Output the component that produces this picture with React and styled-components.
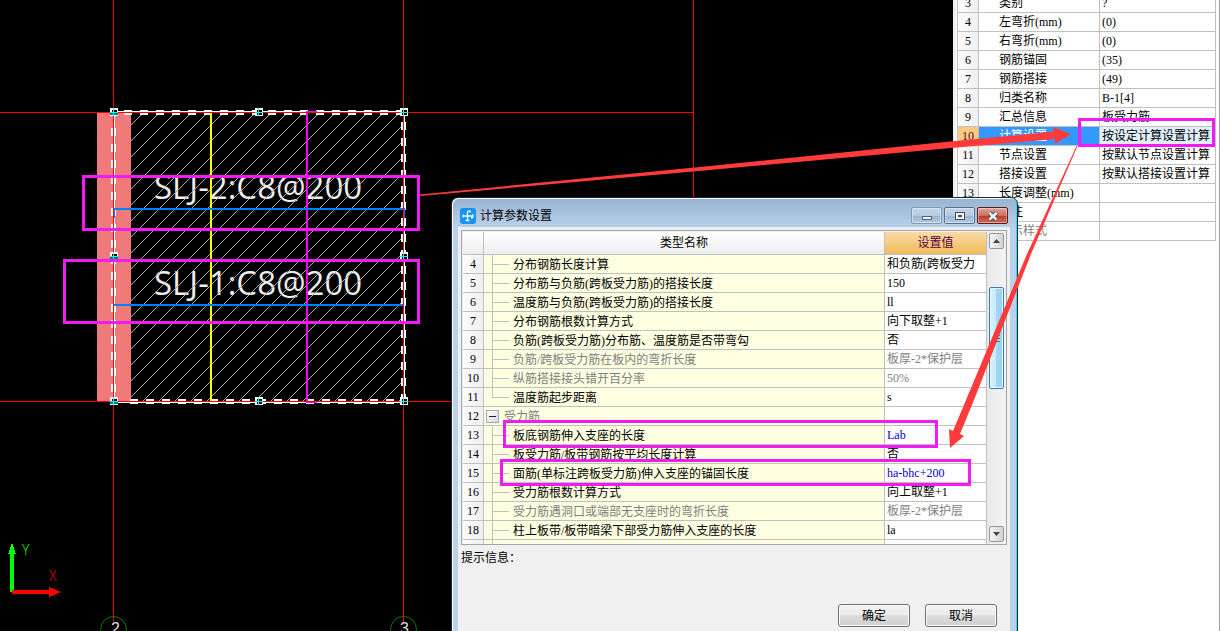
import React from "react";
import styled, { createGlobalStyle, css } from "styled-components";

const properties = [
  { no: 3, name: "类别", value: "?" },
  { no: 4, name: "左弯折(mm)", value: "(0)" },
  { no: 5, name: "右弯折(mm)", value: "(0)" },
  { no: 6, name: "钢筋锚固", value: "(35)" },
  { no: 7, name: "钢筋搭接", value: "(49)" },
  { no: 8, name: "归类名称", value: "B-1[4]" },
  { no: 9, name: "汇总信息", value: "板受力筋" },
  { no: 10, name: "计算设置", value: "按设定计算设置计算", selected: true },
  { no: 11, name: "节点设置", value: "按默认节点设置计算" },
  { no: 12, name: "搭接设置", value: "按默认搭接设置计算" },
  { no: 13, name: "长度调整(mm)", value: "" },
  { no: 14, name: "备注", value: "" },
  { no: 15, name: "显示样式", value: "", muted: true },
];

const settings = [
  { no: 4, name: "分布钢筋长度计算", value: "和负筋(跨板受力" },
  { no: 5, name: "分布筋与负筋(跨板受力筋)的搭接长度", value: "150" },
  { no: 6, name: "温度筋与负筋(跨板受力筋)的搭接长度", value: "ll" },
  { no: 7, name: "分布钢筋根数计算方式", value: "向下取整+1" },
  { no: 8, name: "负筋(跨板受力筋)分布筋、温度筋是否带弯勾", value: "否" },
  { no: 9, name: "负筋/跨板受力筋在板内的弯折长度", value: "板厚-2*保护层", muted: true },
  { no: 10, name: "纵筋搭接接头错开百分率", value: "50%", muted: true },
  { no: 11, name: "温度筋起步距离", value: "s", last: true },
  { no: 12, name: "受力筋", value: "", muted: true, group: true },
  { no: 13, name: "板底钢筋伸入支座的长度", value: "Lab", changed: true },
  { no: 14, name: "板受力筋/板带钢筋按平均长度计算", value: "否" },
  { no: 15, name: "面筋(单标注跨板受力筋)伸入支座的锚固长度", value: "ha-bhc+200", changed: true },
  { no: 16, name: "受力筋根数计算方式", value: "向上取整+1" },
  { no: 17, name: "受力筋遇洞口或端部无支座时的弯折长度", value: "板厚-2*保护层", muted: true },
  { no: 18, name: "柱上板带/板带暗梁下部受力筋伸入支座的长度", value: "la" },
  { no: "", name: "", value: "" },
];

const hatchLines = [];
for (let c = 256; c < 804; c += 16) {
  hatchLines.push(c);
}

const handles = [
  [113, 112], [258, 112], [403, 112],
  [113, 256], [403, 256],
  [113, 401], [258, 401], [403, 401],
];

function Drawing() {
  return (
    <DrawingSvg aria-label="板配筋图">
      <defs>
        <clipPath id="slab">
          <rect x="131" y="113" width="272" height="288" />
        </clipPath>
      </defs>
      <rect x="97" y="113" width="34" height="288" fill="#f07a7a" />
      <g fill="#eee" fontFamily='"Open Sans", "Noto Sans", sans-serif' fontSize="33">
        <text x="154" y="199">SLJ-2:C8@200</text>
        <text x="154" y="295">SLJ-1:C8@200</text>
      </g>
      <g clipPath="url(#slab)" stroke="#a8a8a8" shapeRendering="crispEdges">
        {hatchLines.map((c) => (
          <line key={c} x1={c - 113} y1="113" x2={c - 401} y2="401" />
        ))}
      </g>
      <g shapeRendering="crispEdges">
        <g stroke="#fff" strokeWidth="5" strokeDasharray="8 8">
          <line x1="124" y1="112.5" x2="403" y2="112.5" />
          <line x1="130" y1="401.5" x2="403" y2="401.5" />
          <line x1="113.5" y1="128" x2="113.5" y2="398" />
          <line x1="403.5" y1="122" x2="403.5" y2="398" />
        </g>
        <path d="M114.500 111.500H404.500V402.500H114.500Z" fill="none" stroke="#fff" />
        <rect x="210" y="113" width="2" height="288" fill="#ff0" />
        <path d="M306 111H317V112H308V402H317V403H306Z" fill="#f0f" />
        <g fill="#0080ff">
          <path d="M113 208H405V218H403V210H115V218H113Z" />
          <rect x="113" y="304" width="291" height="2" />
        </g>
        <g stroke="#f00">
          <path d="M0 112.500H694M0 401.500H694M113.500 0V622M403.500 0V622M693.500 0V400" />
        </g>
        {handles.map(([x, y]) => (
          <g key={x + "-" + y}>
            <rect x={x - 3} y={y - 4} width="8" height="8" fill="#fff" />
            <rect x={x - 1} y={y - 2} width="5" height="5" fill="#000" />
            {x === 113 && <rect x={x - 3} y={y} width="8" height="3" fill="#087878" />}
            <path d={`M${x - 3} ${y + 0.5}h8M${x + 0.5} ${y - 4}v8`} stroke="#0ff" />
          </g>
        ))}
        <rect x="10" y="552" width="4" height="40" fill="#0f0" />
        <path d="M12 543L16 554H8Z" fill="#0f0" />
        <rect x="12" y="590" width="38" height="4" fill="#f00" />
        <path d="M49 587L61 592L49 597Z" fill="#f00" />
      </g>
      <g fontFamily='"Open Sans", sans-serif' fontWeight="300" fontSize="14">
        <text x="22" y="555" fill="#0f0">Y</text>
        <text x="49" y="581" fill="#f00">X</text>
      </g>
      <g fill="none" stroke="#008000">
        <circle cx="113.500" cy="629.500" r="13" />
        <circle cx="403.500" cy="629.500" r="13" />
      </g>
      <g fill="#ddd" fontFamily='"Liberation Sans", sans-serif' fontSize="16">
        <text x="111" y="634">2</text>
        <text x="400" y="634">3</text>
      </g>
    </DrawingSvg>
  );
}

function PropertyPanel() {
  return (
    <Panel>
      <PropertyTable>
        <colgroup>
          <col style={{ width: 21 }} />
          <col />
          <col style={{ width: 116 }} />
        </colgroup>
        <tbody>
          {properties.map((p) => (
            <tr key={p.no}>
              <NumberCell scope="row" $selected={p.selected}>{p.no}</NumberCell>
              <PropertyName $selected={p.selected} $muted={p.muted}>{p.name}</PropertyName>
              <PropertyValue $selected={p.selected}>{p.value}</PropertyValue>
            </tr>
          ))}
        </tbody>
      </PropertyTable>
    </Panel>
  );
}

function SettingsDialog() {
  return (
    <Dialog role="dialog" aria-labelledby="dialog-title">
      <TitleBar>
        <AppIcon viewBox="0 0 16 16">
          <rect width="16" height="16" rx="3" fill="#1592f6" />
          <path
            d="M7.500 13V4.500a1.500 1.500 0 0 1 3 0M2.500 8H13M3 6.500v3M13 6v2a2 2 0 0 1-2 2M5.500 12.500h4"
            fill="none"
            stroke="#fff"
            strokeWidth="1.300"
          />
        </AppIcon>
        <Title id="dialog-title">计算参数设置</Title>
        <WindowButton aria-label="最小化" $dim>
          <svg width="12" height="12" viewBox="0 0 12 12">
            <rect x="1.500" y="6.500" width="9" height="3" fill="#eee" stroke="#566370" />
          </svg>
        </WindowButton>
        <WindowButton aria-label="最大化">
          <svg width="12" height="12" viewBox="0 0 12 12">
            <rect x="1.500" y="2.500" width="9" height="7" fill="#f4f4f4" stroke="#46525f" />
            <rect x="4.500" y="5.500" width="3" height="1" fill="#9db6d0" stroke="#46525f" />
          </svg>
        </WindowButton>
        <WindowButton aria-label="关闭" $close>
          <svg width="12" height="12" viewBox="0 0 12 12">
            <path d="M2.500 3L9.500 9.500M9.500 3L2.500 9.500" stroke="#4c4c5a" strokeWidth="4.500" />
            <path d="M2.500 3L9.500 9.500M9.500 3L2.500 9.500" stroke="#f4f4f4" strokeWidth="2.500" />
          </svg>
        </WindowButton>
      </TitleBar>
      <DialogBody>
        <GridFrame>
          <SettingsTable>
            <colgroup>
              <col style={{ width: 21 }} />
              <col />
              <col style={{ width: 102 }} />
            </colgroup>
            <thead>
              <tr>
                <HeadCell />
                <HeadCell scope="col">类型名称</HeadCell>
                <HeadCell scope="col" $active>设置值</HeadCell>
              </tr>
            </thead>
            <tbody>
              {settings.map((s, i) => (
                <tr key={i}>
                  <NumberCell scope="row">{s.no}</NumberCell>
                  <SettingName $muted={s.muted}>
                    <NameLine>
                      {s.group ? <Toggle aria-label="折叠" /> : <Branch $last={s.last} />}
                      <NameText>{s.name}</NameText>
                    </NameLine>
                  </SettingName>
                  <SettingValue $muted={s.muted} $changed={s.changed}>{s.value}</SettingValue>
                </tr>
              ))}
            </tbody>
          </SettingsTable>
          <ScrollBar>
            <ScrollButton aria-label="向上滚动">
              <svg width="7" height="4"><path d="M0 4L3.500 0L7 4Z" fill="#444" /></svg>
            </ScrollButton>
            <Track>
              <Thumb>
                <svg width="7" height="7">
                  <path d="M0 0.500H7M0 3.500H7M0 6.500H7" stroke="#3b7795" />
                </svg>
              </Thumb>
            </Track>
            <ScrollButton aria-label="向下滚动">
              <svg width="7" height="4"><path d="M0 0L3.500 4L7 0Z" fill="#444" /></svg>
            </ScrollButton>
          </ScrollBar>
        </GridFrame>
        <Hint>提示信息：</Hint>
        <Actions>
          <PushButton>确定</PushButton>
          <PushButton>取消</PushButton>
        </Actions>
      </DialogBody>
    </Dialog>
  );
}

// marker boxes and arrows drawn over the whole workspace
function Markup() {
  return (
    <MarkupSvg aria-hidden="true">
      <g fill="none" stroke="#f31bf3" strokeWidth="3" shapeRendering="crispEdges">
        <rect x="83.500" y="176.500" width="335" height="53" />
        <rect x="64.500" y="260.500" width="354" height="62" />
        <rect x="1079.500" y="119.500" width="134" height="26" />
        <rect x="504.500" y="421.500" width="432" height="25" />
        <rect x="501.500" y="460.500" width="468" height="24" />
      </g>
      <g fill="#ff3a3a">
        <path d="M420 194.500L710 166L940 142.500L1054 131.500L1053 127L1071 134L1055 144V139L940 149L710 170L420 196Z" />
        <path d="M1076.500 146L1027 254L966 400L953 431L949 429L950 448L964 436L960 434L974 400L1031 254L1077.500 146Z" />
      </g>
    </MarkupSvg>
  );
}

function App() {
  return (
    <Workspace>
      <GlobalStyle />
      <Canvas>
        <Drawing />
      </Canvas>
      <PropertyPanel />
      <SettingsDialog />
      <Markup />
    </Workspace>
  );
}

const GlobalStyle = createGlobalStyle`
  * {
    box-sizing: border-box;
  }
  body {
    margin: 0;
    font-family: "Liberation Serif", "Noto Sans CJK SC", serif;
    font-size: 12px;
    line-height: 18px;
    color: #000;
  }
  button {
    font: inherit;
    color: inherit;
    padding: 0;
  }
`;

const Workspace = styled.div`
  position: relative;
  display: flex;
  height: 100vh;
  overflow: hidden;
  background: #000;
`;

const Canvas = styled.main`
  flex: 1;
  min-width: 0;
  background: #000;
`;

const DrawingSvg = styled.svg`
  display: block;
  width: 100%;
  height: 100%;
`;

const Panel = styled.aside`
  width: 267px;
  padding: 0 3px 0 2px;
  background: #fff;
  border-left: 3px solid #f0f0f0;
  border-right: 1px solid #a0a0a0;
  overflow: hidden;
`;

const baseTable = css`
  table-layout: fixed;
  border-collapse: separate;
  border-spacing: 0;
`;

const cell = css`
  height: 19px;
  padding: 0;
  border-right: 1px solid #c0c0c0;
  border-bottom: 1px solid #c0c0c0;
  white-space: nowrap;
  overflow: hidden;
`;

const PropertyTable = styled.table`
  ${baseTable}
  width: 100%;
  margin-top: -6px;
  box-shadow: -1px 0 0 #c0c0c0;
`;

const NumberCell = styled.th`
  ${cell}
  font-weight: normal;
  text-align: center;
  background: ${(p) => (p.$selected ? "#fbcb7d" : "linear-gradient(90deg, #fcfcfc, #f0f0f0)")};
  color: ${(p) => (p.$selected ? "#5c0048" : "#000")};
`;

const PropertyName = styled.td`
  ${cell}
  padding-left: 20px;
  background: ${(p) => (p.$selected ? "#3399ff" : "#fff")};
  color: ${(p) => (p.$selected ? "#fff" : p.$muted ? "#808080" : "#000")};
`;

const PropertyValue = styled.td`
  ${cell}
  padding-left: 2px;
  background: ${(p) => (p.$selected ? "#e1effd" : "#fff")};
`;

const Dialog = styled.section`
  position: absolute;
  left: 451px;
  top: 197px;
  bottom: -8px;
  width: 567px;
  display: flex;
  flex-direction: column;
  padding: 0 6px;
  border: 1px solid #1c2a38;
  border-radius: 7px 7px 0 0;
  background: linear-gradient(#98b4d1, #b9d1ea 30px);
  box-shadow: inset 1px 1px 0 #fff, inset -1px 0 0 #35d6f2;
`;

const TitleBar = styled.header`
  display: flex;
  align-items: center;
  gap: 2px;
  height: 29px;
  padding: 6px 3px 0 2px;
`;

const AppIcon = styled.svg`
  width: 16px;
  height: 16px;
  margin-right: 2px;
`;

const Title = styled.h1`
  flex: 1;
  margin: 0;
  font-size: 12px;
  font-weight: normal;
`;

const WindowButton = styled.button`
  display: flex;
  align-items: center;
  justify-content: center;
  width: 31px;
  height: 17px;
  border: 1px solid ${(p) => (p.$close ? "#5a1a20" : p.$dim ? "#8299b4" : "#59708c")};
  border-radius: 2px;
  box-shadow: inset 0 0 0 1px rgba(255, 255, 255, 0.4);
  background: ${(p) =>
    p.$close
      ? "linear-gradient(#e3a49b, #cf6d5e 50%, #b93a26 50%, #cf6b50)"
      : "linear-gradient(#c3d5e9, #b4cae2 50%, #98b3d0 50%, #b4cce4)"};
`;

const DialogBody = styled.div`
  flex: 1;
  display: flex;
  flex-direction: column;
  margin-right: 1px;
  padding: 3px 3px 0;
  background: #f0f0f0;
`;

const GridFrame = styled.div`
  display: flex;
  height: 315px;
  padding: 1px;
  border: 1px solid #a0a4ac;
  background: #f0f0f0;
  overflow: hidden;
`;

const SettingsTable = styled.table`
  ${baseTable}
  flex: 1;
  width: 0;
  height: 100%;
`;

const HeadCell = styled.th`
  ${cell}
  height: 23px;
  font-weight: normal;
  background: ${(p) => (p.$active ? "linear-gradient(#f9dba6, #f0bb5c)" : "linear-gradient(#fff, #ededed)")};
  color: ${(p) => (p.$active ? "#5c0048" : "#000")};
`;

const SettingName = styled.td`
  ${cell}
  background: #ffffe1;
  color: ${(p) => (p.$muted ? "#808080" : "#000")};
`;

const NameLine = styled.div`
  display: flex;
  align-items: center;
  height: 18px;
`;

const NameText = styled.span`
  padding-top: 2px;
`;

const Branch = styled.span`
  width: 17px;
  height: 18px;
  margin: 0 4px 0 8px;
  background: linear-gradient(#c0c0c0, #c0c0c0) 0 0 / 1px ${(p) => (p.$last ? "10px" : "100%")} no-repeat,
    linear-gradient(#c0c0c0, #c0c0c0) 0 9px / 100% 1px no-repeat;
`;

const Toggle = styled.button`
  width: 13px;
  height: 13px;
  margin: 0 5px 0 2px;
  border: 1px solid #a8a8b0;
  background: linear-gradient(#222, #222) center / 7px 1px no-repeat, linear-gradient(135deg, #fff, #d4d8e0);
`;

const SettingValue = styled.td`
  ${cell}
  padding-left: 2px;
  background: #fff;
  color: ${(p) => (p.$changed ? "#0000d8" : p.$muted ? "#808080" : "#000")};
`;

const ScrollBar = styled.div`
  display: flex;
  flex-direction: column;
  width: 18px;
  padding: 1px 1px 1px 2px;
  background: linear-gradient(90deg, #e8e8e8, #f4f4f4);
`;

const ScrollButton = styled.button`
  display: flex;
  align-items: center;
  justify-content: center;
  height: 16px;
  border: 1px solid #989898;
  border-radius: 2px;
  background: linear-gradient(90deg, #f6f6f6, #d2d2d2);
`;

const Track = styled.div`
  flex: 1;
  padding-top: 38px;
`;

const Thumb = styled.div`
  display: flex;
  align-items: center;
  justify-content: center;
  height: 102px;
  border: 1px solid #3c7fb1;
  border-radius: 2px;
  box-shadow: inset 0 0 0 1px #e3f4fc;
  background: linear-gradient(90deg, #dff2fc, #c5e9fb 45%, #a4d8f2 50%, #98d0ee);
`;

const Hint = styled.p`
  margin: 4px 0 0;
`;

const Actions = styled.div`
  display: flex;
  justify-content: flex-end;
  gap: 15px;
  margin-top: 37px;
  padding-right: 10px;
`;

const PushButton = styled.button`
  width: 72px;
  height: 23px;
  border: 1px solid #707070;
  border-radius: 3px;
  box-shadow: inset 0 0 0 1px #fafafa;
  background: linear-gradient(#f2f2f2, #ebebeb 50%, #dddddd 50%, #cfcfcf);
`;

const MarkupSvg = styled.svg`
  position: absolute;
  inset: 0;
  width: 100%;
  height: 100%;
  pointer-events: none;
`;

export default App;
